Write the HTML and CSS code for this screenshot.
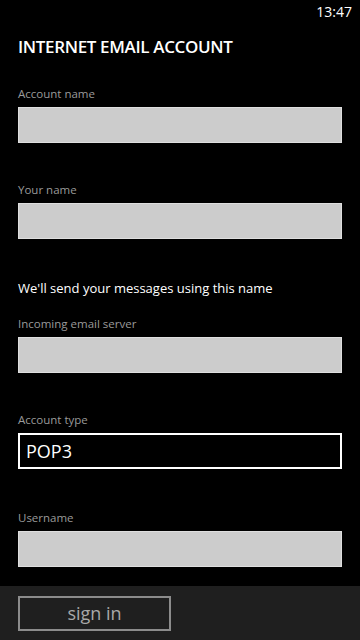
FILE: index.html
```html
<!DOCTYPE html>
<html lang="en">
<head>
    <meta charset="UTF-8">
    <title>Internet email account</title>
    <link rel="stylesheet" href="styles.css">
</head>
<body>
    <div class="phone">
        <div class="status-bar">13:47</div>

        <div class="content">
            <h1 class="page-title">INTERNET EMAIL ACCOUNT</h1>

            <div class="field">
                <label class="field-label">Account name</label>
                <div class="text-box"></div>
            </div>

            <div class="field">
                <label class="field-label">Your name</label>
                <div class="text-box"></div>
            </div>

            <p class="hint">We'll send your messages using this name</p>

            <div class="field">
                <label class="field-label">Incoming email server</label>
                <div class="text-box"></div>
            </div>

            <div class="field">
                <label class="field-label">Account type</label>
                <div class="text-box picker">POP3</div>
            </div>

            <div class="field">
                <label class="field-label">Username</label>
                <div class="text-box"></div>
            </div>
        </div>

        <div class="app-bar">
            <button class="sign-in">sign in</button>
        </div>
    </div>
</body>
</html>
```

FILE: styles.css
```css
body {
    margin: 0;
    background: #000;
    font-family: "Open Sans", "Noto Sans", sans-serif;
    color: #fff;
}

.phone {
    width: 360px;
    height: 640px;
    display: flex;
    flex-direction: column;
    overflow: hidden;
}

.status-bar {
    height: 24px;
    line-height: 24px;
    text-align: right;
    padding-right: 8px;
    font-size: 14px;
}

.content {
    flex: 1;
    overflow: hidden;
    padding: 0 18px;
}

.page-title {
    margin: 12px 0 28px;
    font-size: 17px;
    font-weight: 600;
    line-height: 22px;
    letter-spacing: -0.35px;
}

.field {
    margin-bottom: 39px;
}

.field:nth-of-type(4) {
    margin-bottom: 41px;
}

.field-label {
    display: block;
    font-size: 11.5px;
    line-height: 16px;
    color: #9a9a9a;
    margin-bottom: 5px;
}

.text-box {
    box-sizing: border-box;
    height: 36px;
    background: #cccccc;
    border: 1px solid #dedede;
}

.picker {
    background: #000;
    border: 2px solid #fff;
    font-size: 18px;
    line-height: 32px;
    padding-left: 6px;
}

.hint {
    margin: 1px 0 18px;
    font-size: 13px;
    line-height: 20px;
}

.app-bar {
    height: 54px;
    background: #1f1f1f;
    padding: 10px 18px 0;
    box-sizing: border-box;
}

.sign-in {
    width: 153px;
    height: 35px;
    background: transparent;
    border: 2px solid #8c8c8c;
    color: #a8a8a8;
    font-family: inherit;
    font-size: 18px;
    padding: 0 0 2px;
}
```
